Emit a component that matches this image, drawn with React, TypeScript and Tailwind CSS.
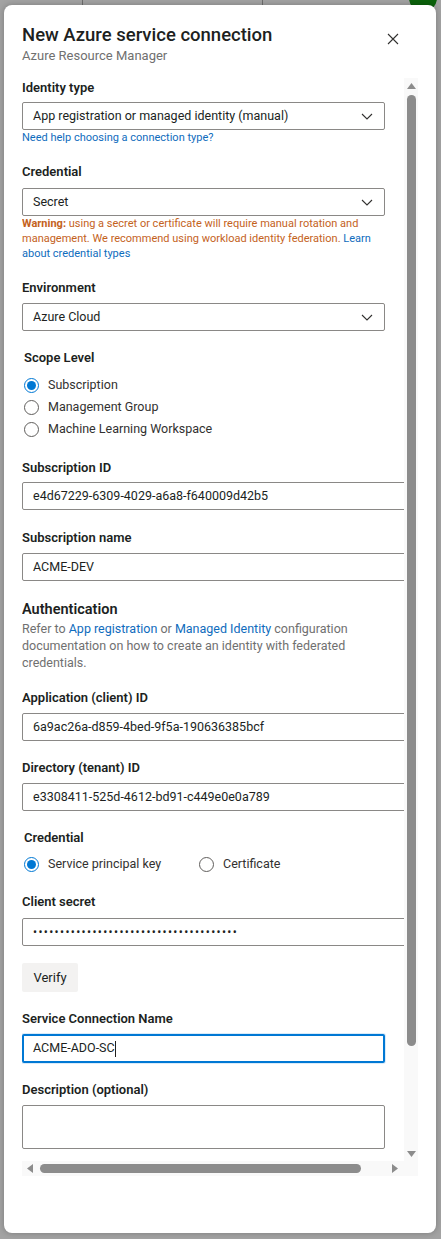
import React from "react";

function Chevron() {
  return (
    <svg width="12" height="7" viewBox="0 0 12 7" fill="none" className="shrink-0">
      <path d="M1 1l5 5 5-5" stroke="#323130" strokeWidth="1.1" />
    </svg>
  );
}

function Select({ value }: { value: string }) {
  return (
    <div className="flex h-[28px] w-[363px] items-center justify-between rounded-[2px] border border-[#8a8886] bg-white pl-[10px] pr-[11px] text-[12.5px] text-[#201f1e]">
      <span>{value}</span>
      <Chevron />
    </div>
  );
}

function TextInput({ value }: { value: string }) {
  return (
    <div className="flex h-[28px] w-[420px] items-center rounded-[2px] border border-[#8a8886] bg-white pl-[10px] text-[12.5px] text-[#201f1e]">
      <span>{value}</span>
    </div>
  );
}

function Label({ children, className = "" }: { children: React.ReactNode; className?: string }) {
  return <div className={"h-[20px] text-[13px] font-semibold leading-[20px] text-[#201f1e] " + className}>{children}</div>;
}

function Radio({ label }: { label: string }) {
  return (
    <div className="flex h-[22px] items-center">
      <div className="ml-[2px] flex h-[15px] w-[15px] items-center justify-center rounded-full border border-[#605e5c] bg-white" />
      <span className="ml-[9px] text-[12.5px] text-[#323130]">{label}</span>
    </div>
  );
}

function RadioChecked({ label }: { label: string }) {
  return (
    <div className="flex h-[22px] items-center">
      <div className="ml-[2px] flex h-[15px] w-[15px] items-center justify-center rounded-full border border-[#0078d4] bg-white">
        <div className="h-[9px] w-[9px] rounded-full bg-[#0078d4]" />
      </div>
      <span className="ml-[9px] text-[12.5px] text-[#323130]">{label}</span>
    </div>
  );
}

export default function App() {
  const dots = "••••••••••••••••••••••••••••••••••••••";
  return (
    <div className="relative h-[1239px] w-[441px] overflow-hidden bg-[#a3a3a3] font-['Segoe_UI',Roboto,sans-serif]">
      {/* background hints */}
      <div className="absolute left-[82px] top-0 h-[6px] w-[1px] bg-[#6e6e6e]" />
      <div className="absolute left-[262px] top-0 h-[6px] w-[1px] bg-[#6e6e6e]" />
      <div className="absolute left-[409px] top-[-16px] h-[28px] w-[28px] rounded-full bg-[#0b620b]" />

      <div className="relative ml-[4px] mt-[5px] flex h-[1228px] w-[432px] flex-col rounded-[8px] bg-white pl-[18px] pr-[18px] shadow-[0_0_6px_rgba(0,0,0,0.25)]">
        {/* header */}
        <div className="flex pt-[18px]">
          <div className="flex-1">
            <div className="text-[18.5px] font-medium leading-[24px] text-[#201f1e]">New Azure service connection</div>
            <div className="mt-[1px] text-[13px] leading-[16px] text-[#707070]">Azure Resource Manager</div>
          </div>
          <button className="mr-[11px] mt-[2px] flex h-[28px] w-[28px] items-center justify-center">
            <svg width="12" height="12" viewBox="0 0 12 12" fill="none">
              <path d="M1 1l10 10M11 1L1 11" stroke="#323130" strokeWidth="1.1" />
            </svg>
          </button>
        </div>

        {/* scroll region */}
        <div className="mt-[14px] flex w-[396px] flex-col">
          <div className="flex h-[1083px]">
            <div className="w-[382px] overflow-hidden">
              <Label>Identity type</Label>
              <div className="mt-[4px]">
                <Select value="App registration or managed identity (manual)" />
              </div>
              <div className="h-[16px] text-[11px] leading-[16px] text-[#0f6cbd]">Need help choosing a connection type?</div>

              <Label className="mt-[16px]">Credential</Label>
              <div className="mt-[6px]">
                <Select value="Secret" />
              </div>
              <div className="w-[363px] whitespace-nowrap text-[11px] leading-[15px] text-[#c4621c]">
                <span className="font-bold">Warning:</span> using a secret or certificate will require manual rotation and
                <br />
                management. We recommend using workload identity federation.{" "}
                <span className="text-[#0f6cbd]">Learn</span>
                <br />
                <span className="text-[#0f6cbd]">about credential types</span>
              </div>

              <Label className="mt-[17px]">Environment</Label>
              <div className="mt-[5px]">
                <Select value="Azure Cloud" />
              </div>

              <Label className="ml-[2px] mt-[17px]">Scope Level</Label>
              <div className="mt-[6px] flex flex-col">
                <RadioChecked label="Subscription" />
                <Radio label="Management Group" />
                <Radio label="Machine Learning Workspace" />
              </div>

              <Label className="mt-[18px]">Subscription ID</Label>
              <div className="mt-[4px]">
                <TextInput value="e4d67229-6309-4029-a6a8-f640009d42b5" />
              </div>

              <Label className="mt-[18px]">Subscription name</Label>
              <div className="mt-[5px]">
                <TextInput value="ACME-DEV" />
              </div>

              <div className="mt-[19px] h-[20px] text-[14.5px] font-semibold leading-[20px] text-[#201f1e]">Authentication</div>
              <div className="whitespace-nowrap text-[12.5px] leading-[17px] text-[#707070]">
                Refer to <span className="text-[#0f6cbd]">App registration</span> or{" "}
                <span className="text-[#0f6cbd]">Managed Identity</span> configuration
                <br />
                documentation on how to create an identity with federated
                <br />
                credentials.
              </div>

              <Label className="mt-[17px]">Application (client) ID</Label>
              <div className="mt-[5px]">
                <TextInput value="6a9ac26a-d859-4bed-9f5a-190636385bcf" />
              </div>

              <Label className="mt-[17px]">Directory (tenant) ID</Label>
              <div className="mt-[5px]">
                <TextInput value="e3308411-525d-4612-bd91-c449e0e0a789" />
              </div>

              <Label className="ml-[2px] mt-[17px]">Credential</Label>
              <div className="mt-[5px] flex">
                <div className="w-[175px]">
                  <RadioChecked label="Service principal key" />
                </div>
                <Radio label="Certificate" />
              </div>

              <Label className="mt-[17px]">Client secret</Label>
              <div className="mt-[6px]">
                <div className="flex h-[28px] w-[420px] items-center rounded-[2px] border border-[#8a8886] bg-white pl-[10px] text-[#201f1e]">
                  <span className="text-[12px] tracking-[1.35px]">{dots}</span>
                </div>
              </div>

              <button className="mt-[17px] flex h-[29px] w-[56px] items-center justify-center rounded-[2px] bg-[#f3f2f1] text-[13px] text-[#201f1e]">
                Verify
              </button>

              <Label className="mt-[17px]">Service Connection Name</Label>
              <div className="mt-[5px]">
                <div className="flex h-[29px] w-[363px] items-center rounded-[2px] border-2 border-[#0078d4] bg-white pl-[9px] text-[12.5px] text-[#201f1e] shadow-[0_0_0_1px_rgba(0,120,212,0.15)]">
                  <span>ACME-ADO-SC</span>
                  <span className="h-[16px] w-[1px] bg-[#201f1e]" />
                </div>
              </div>

              <Label className="mt-[17px]">Description (optional)</Label>
              <div className="mt-[5px] h-[44px] w-[363px] rounded-[2px] border border-[#8a8886] bg-white" />
            </div>

            {/* vertical scrollbar */}
            <div className="flex w-[14px] flex-col items-center bg-[#f9f9f9] pt-[5px]">
              <svg width="9" height="6" viewBox="0 0 9 6">
                <path d="M4.5 0L9 6H0z" fill="#8c8c8c" />
              </svg>
              <div className="mt-[6px] h-[951px] w-[9px] rounded-full bg-[#8c8c8c]" />
              <div className="flex-1" />
              <svg width="9" height="6" viewBox="0 0 9 6" className="mb-[4px]">
                <path d="M0 0h9L4.5 6z" fill="#8c8c8c" />
              </svg>
            </div>
          </div>
          {/* horizontal scrollbar */}
          <div className="flex h-[15px] items-center bg-[#f9f9f9] pl-[5px]">
            <svg width="6" height="9" viewBox="0 0 6 9">
              <path d="M0 4.5L6 0v9z" fill="#8c8c8c" />
            </svg>
            <div className="ml-[7px] h-[9px] w-[321px] rounded-full bg-[#8c8c8c]" />
            <div className="flex-1" />
            <svg width="6" height="9" viewBox="0 0 6 9" className="mr-[20px]">
              <path d="M6 4.5L0 0v9z" fill="#8c8c8c" />
            </svg>
          </div>
        </div>
      </div>
    </div>
  );
}
